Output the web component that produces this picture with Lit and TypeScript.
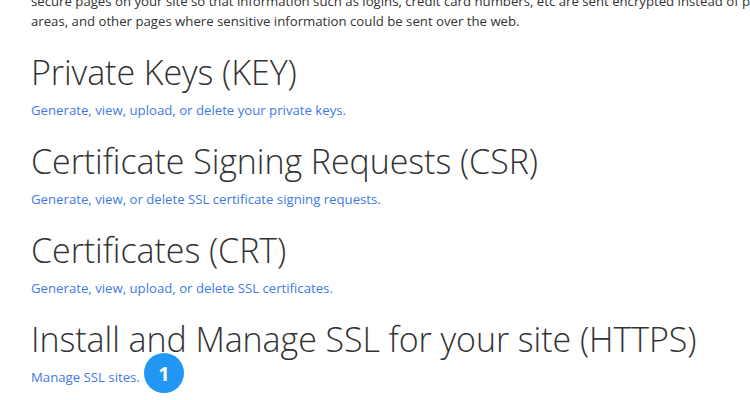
import { LitElement, html, css } from "lit";
import { customElement } from "lit/decorators.js";

const sections = [
  ["Private Keys (KEY)", "Generate, view, upload, or delete your private keys."],
  ["Certificate Signing Requests (CSR)", "Generate, view, or delete SSL certificate signing requests."],
  ["Certificates (CRT)", "Generate, view, upload, or delete SSL certificates."],
  ["Install and Manage SSL for your site (HTTPS)", "Manage SSL sites."],
];

@customElement("app-root")
export class AppRoot extends LitElement {
  static styles = css`
    :host {
      display: block;
      width: 750px;
      height: 400px;
      overflow: hidden;
      background: #fff;
      font-family: "Open Sans", "Noto Sans", sans-serif;
      color: #333;
    }
    .page {
      position: relative;
      padding-left: 31px;
      margin-top: -9px;
      height: 409px;
    }
    .intro {
      margin: 0;
      width: 760px;
      font-size: 13.2px;
      line-height: 20px;
      white-space: nowrap;
    }
    section {
      display: flex;
      flex-direction: column;
      height: 89px;
    }
    .sections {
      margin-top: 17px;
    }
    h2 {
      margin: 0;
      font-size: 34px;
      font-weight: 300;
      line-height: 48px;
      letter-spacing: -0.07px;
      color: #333;
      white-space: nowrap;
    }
    a {
      margin-top: 4px;
      font-size: 13.2px;
      line-height: 20px;
      color: #4279e8;
      text-decoration: none;
    }
    .badge {
      position: absolute;
      left: 144px;
      top: 362px;
      width: 40px;
      height: 40px;
      border-radius: 50%;
      background: #2196f3;
      color: #fff;
      display: flex;
      align-items: center;
      justify-content: center;
      font-size: 20px;
      font-weight: 700;
    }
  `;

  render() {
    return html`
      <div class="page">
        <p class="intro">
          secure pages on your site so that information such as logins, credit card numbers, etc are sent encrypted instead of plain text<br />
          areas, and other pages where sensitive information could be sent over the web.
        </p>
        <div class="sections">
          ${sections.map(
            ([t, l]) => html`<section><h2>${t}</h2><a href="#">${l}</a></section>`
          )}
        </div>
        <div class="badge">1</div>
      </div>
    `;
  }
}
